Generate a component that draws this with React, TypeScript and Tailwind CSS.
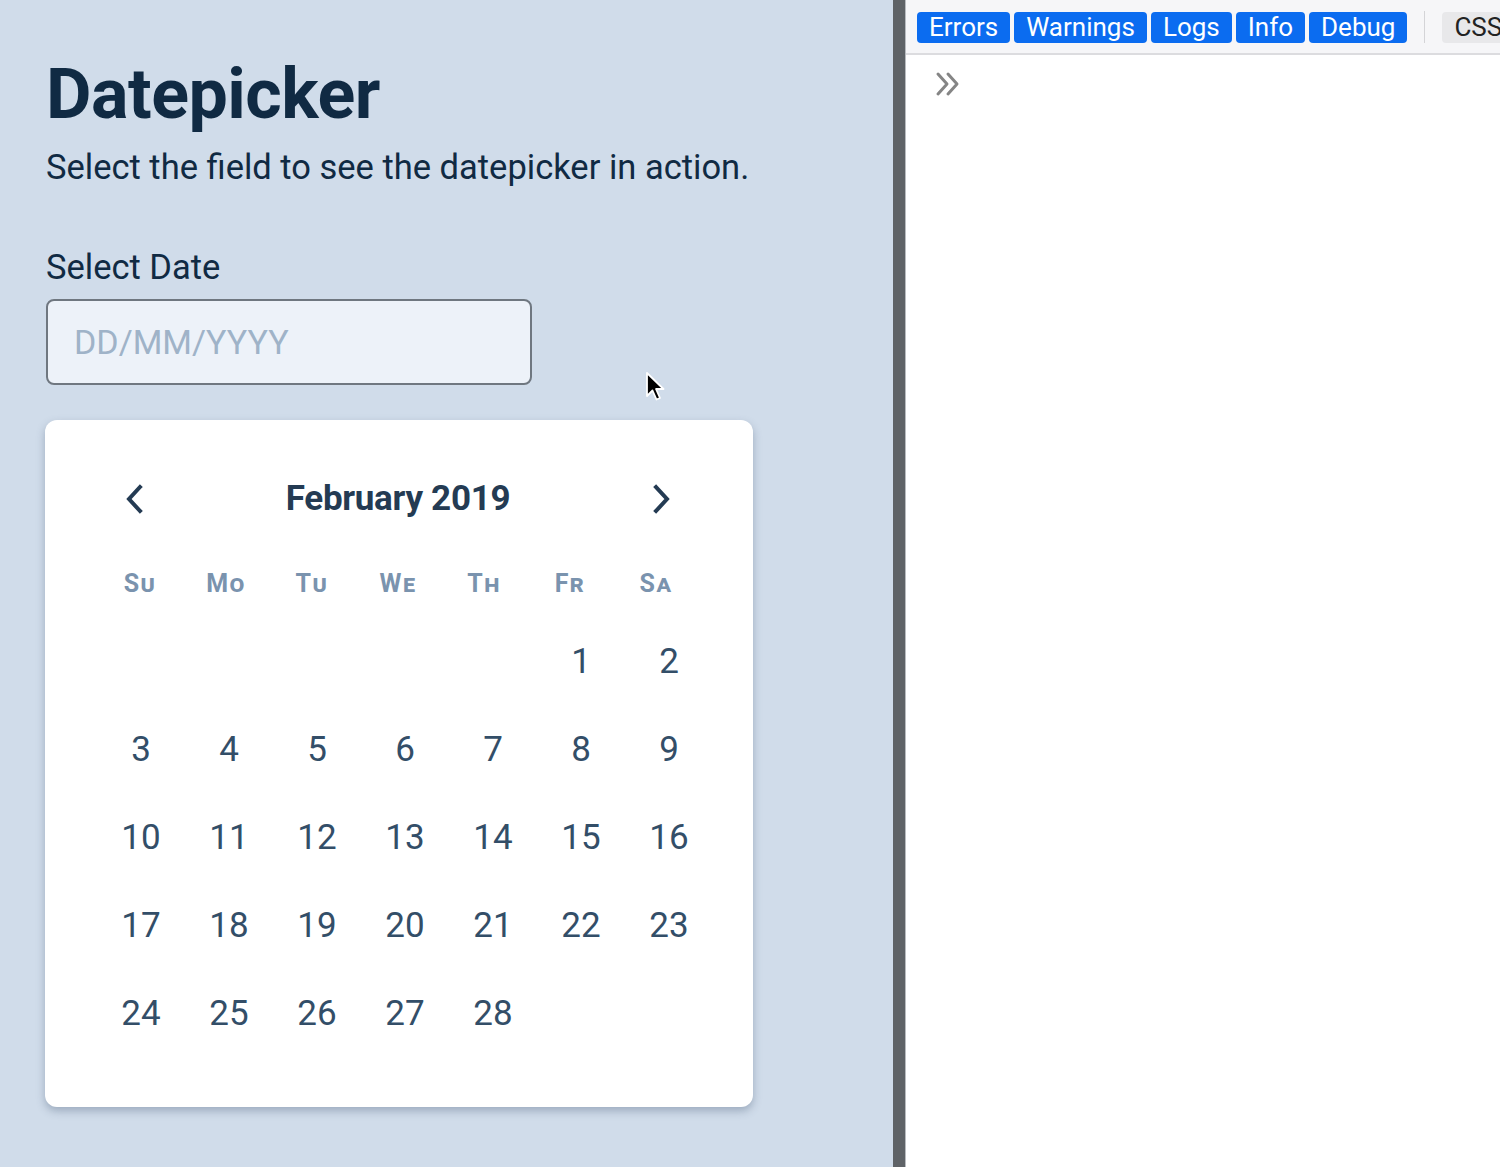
import { useState } from "react";

const WEEKDAYS = ["Su", "Mo", "Tu", "We", "Th", "Fr", "Sa"];
const FILTERS = ["Errors", "Warnings", "Logs", "Info", "Debug"];

// February 2019 starts on a Friday
const days: (number | null)[] = [null, null, null, null, null, ...Array.from({ length: 28 }, (_, i) => i + 1)];

function Chevron({ dir }: { dir: "left" | "right" }) {
    return (
        <svg width="24" height="30" viewBox="0 0 24 30" fill="none">
            <path
                d={dir === "left" ? "M17 3 L6 15 L17 27" : "M7 3 L18 15 L7 27"}
                stroke="#243b53"
                strokeWidth="4"
                strokeLinecap="square"
                strokeLinejoin="miter"
            />
        </svg>
    );
}

function Calendar() {
    return (
        <div className="w-[708px] bg-white rounded-[12px] shadow-[0_4px_8px_rgba(60,80,110,0.35)] pt-[54px] pb-[49px] pl-[52px]">
            {/* Month header */}
            <div className="w-[616px] flex items-center justify-between pl-[26px] pr-[40px] h-[50px]">
                <Chevron dir="left" />
                <div className="text-[35px] font-bold text-[#243b53] tracking-[-0.3px]">February 2019</div>
                <Chevron dir="right" />
            </div>

            {/* Weekday labels */}
            <div className="grid grid-cols-[repeat(7,86px)] mt-[41px] h-[30px] items-center">
                {WEEKDAYS.map((d) => (
                    <div
                        key={d}
                        className="text-center text-[25px] font-bold text-[#7a93ae] tracking-[1.5px] [font-variant:small-caps]"
                    >
                        {d}
                    </div>
                ))}
            </div>

            {/* Days */}
            <div className="grid grid-cols-[repeat(7,88px)] auto-rows-[88px] mt-[23px]">
                {days.map((d, i) => (
                    <div key={i} className="flex items-center justify-center text-[35px] text-[#334e68]">
                        {d}
                    </div>
                ))}
            </div>
        </div>
    );
}

export default function App() {
    const [value, setValue] = useState("");

    return (
        <div className="w-[1500px] h-[1167px] flex overflow-hidden font-['Roboto',sans-serif]">
            {/* Demo pane */}
            <div className="relative shrink-0 w-[893px] h-full bg-[#d0dcea] pl-[46px] pt-[54px]">
                <h1 className="text-[70px] leading-[80px] font-bold text-[#102a43] tracking-[-0.5px]">Datepicker</h1>
                <p className="text-[34.5px] leading-[46px] text-[#102a43] mt-[10px]">
                    Select the field to see the datepicker in action.
                </p>

                <label className="block text-[34.5px] leading-[46px] text-[#102a43] mt-[54px]">Select Date</label>
                <input
                    value={value}
                    onChange={(e) => setValue(e.target.value)}
                    placeholder="DD/MM/YYYY"
                    className="mt-[9px] w-[486px] h-[86px] rounded-[8px] border-2 border-[#6f7780] bg-[#edf2f9] px-[26px] text-[34px] text-[#102a43] placeholder:text-[#9fb3c8] outline-none"
                />

                <div className="mt-[35px] -ml-[1px]">
                    <Calendar />
                </div>

                {/* mouse pointer */}
                <svg className="absolute left-[645px] top-[371px]" width="22" height="32" viewBox="0 0 22 32">
                    <path d="M2 2 L2 25 L7.5 19.5 L11.5 28.5 L15 27 L11 18 L18.5 18 Z" fill="#000" stroke="#fff" strokeWidth="1.8" strokeLinejoin="round" />
                </svg>
            </div>

            {/* Splitter */}
            <div className="shrink-0 w-[13px] h-full bg-[#5f6367] border-r border-[#b9bcc0]" />

            {/* Console pane */}
            <div className="flex-1 min-w-0 h-full bg-white flex flex-col overflow-hidden">
                <div className="h-[55px] bg-[#f6f6f8] border-b-2 border-[#dcdcdf] flex items-center pl-[11px] gap-[4px] whitespace-nowrap">
                    {FILTERS.map((f) => (
                        <button
                            key={f}
                            className="shrink-0 h-[31px] mt-[1px] px-[12px] rounded-[4px] bg-[#0b6cf0] text-white text-[26px] leading-[31px]"
                        >
                            {f}
                        </button>
                    ))}
                    <div className="shrink-0 w-px h-[32px] bg-[#d4d4d7] mx-[13px]" />
                    <button className="shrink-0 h-[31px] mt-[1px] px-[12px] rounded-[4px] bg-[#e8e8ea] text-[#222] text-[26px] leading-[31px]">
                        CSS
                    </button>
                </div>
                <div className="pl-[28px] pt-[16px]">
                    <svg width="30" height="26" viewBox="0 0 30 26" fill="none">
                        <path d="M4 3 L13 13 L4 23 M14 3 L23 13 L14 23" stroke="#858585" strokeWidth="3" strokeLinecap="round" strokeLinejoin="round" />
                    </svg>
                </div>
            </div>
        </div>
    );
}
